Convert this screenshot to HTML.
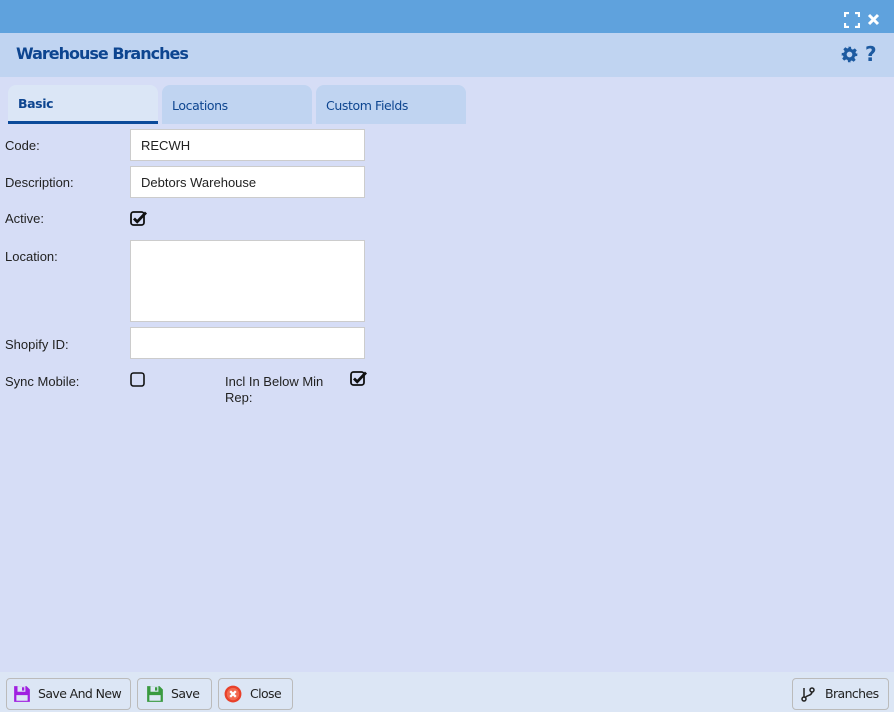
<!DOCTYPE html>
<html><head><style>
*{box-sizing:border-box;margin:0;padding:0}
body{width:894px;height:712px;background:#d6ddf6;font-family:"Liberation Sans",sans-serif;position:relative;overflow:hidden}
.a{position:absolute}
.top{left:0;top:0;width:894px;height:33px;background:#5fa2dd}
.title{left:0;top:33px;width:894px;height:44px;background:#c0d4f1}
.title span{position:absolute;left:16px;top:11px;font-family:"DejaVu Sans",sans-serif;font-weight:bold;font-size:16px;letter-spacing:-1px;color:#0d4590}
.tab{top:85px;width:150px;height:39px;background:#c0d4f1;border-radius:8px 8px 0 0;font-family:"DejaVu Sans",sans-serif;font-size:12.5px;letter-spacing:-0.4px;color:#0d4590;padding:13px 0 0 10px}
.lbl{left:5px;font-size:13px;color:#222}
.inp{left:130px;width:235px;background:#fff;border:1px solid #ccc;font-size:13px;color:#222;padding:8px 10px}
.foot{left:0;top:672px;width:894px;height:40px;background:#dce6f5}
.btn{top:678px;height:32px;border:1px solid #bbb;border-radius:4px;background:#dce6f5;font-family:"DejaVu Sans",sans-serif;font-size:12.5px;letter-spacing:-0.6px;color:#222;padding:7px 0 0 0}
</style></head><body>
<div class="a top"></div>
<svg class="a" style="left:844px;top:12px" width="16" height="16" viewBox="0 0 16 16" fill="none" stroke="#fff" stroke-width="2.2"><path d="M1 5V1h4M11 1h4v4M15 11v4h-4M5 15H1v-4"/></svg>
<svg class="a" style="left:867px;top:13px" width="13" height="13" viewBox="0 0 13 13" stroke="#fff" stroke-width="3"><path d="M2 2l9 9M11 2l-9 9"/></svg>
<div class="a title"><span>Warehouse Branches</span></div>
<svg class="a" style="left:841px;top:46px" width="17" height="17" viewBox="0 0 24 24"><path fill="#1d5aa0" d="M10 1h4l.6 3.2 2.2 1 2.7-1.9 2.8 2.8-1.9 2.7 1 2.2L23 10v4l-3.2.6-1 2.2 1.9 2.7-2.8 2.8-2.7-1.9-2.2 1L14 23h-4l-.6-3.2-2.2-1-2.7 1.9-2.8-2.8 1.9-2.7-1-2.2L1 14v-4l3.2-.6 1-2.2-1.9-2.7 2.8-2.8 2.7 1.9 2.2-1zM12 8a4 4 0 100 8 4 4 0 000-8z"/></svg>
<div class="a" style="left:865px;top:42px;font-family:'DejaVu Sans',sans-serif;font-weight:bold;font-size:20px;color:#1d5aa0">?</div>
<div class="a tab" style="left:8px;background:#dbe6f6;font-weight:bold;padding-top:11px;border-bottom:3px solid #0b4a9a">Basic</div>
<div class="a tab" style="left:162px">Locations</div>
<div class="a tab" style="left:316px">Custom Fields</div>
<div class="a lbl" style="top:138px">Code:</div>
<div class="a inp" style="top:129px;height:32px">RECWH</div>
<div class="a lbl" style="top:175px">Description:</div>
<div class="a inp" style="top:166px;height:32px">Debtors Warehouse</div>
<div class="a lbl" style="top:211px">Active:</div>
<svg class="a" style="left:130px;top:210px" width="19" height="17" viewBox="0 0 19 17"><rect x="1" y="2" width="13" height="13" rx="2.5" fill="none" stroke="#111" stroke-width="1.8"/><path d="M4 8.5l3.2 3.2L16 2.5" fill="none" stroke="#111" stroke-width="2.8"/></svg>
<div class="a lbl" style="top:249px">Location:</div>
<div class="a inp" style="top:240px;height:82px"></div>
<div class="a lbl" style="top:337px">Shopify ID:</div>
<div class="a inp" style="top:327px;height:32px"></div>
<div class="a lbl" style="top:374px">Sync Mobile:</div>
<svg class="a" style="left:130px;top:371px" width="17" height="17" viewBox="0 0 17 17"><rect x="1" y="2" width="13" height="13" rx="2.5" fill="none" stroke="#111" stroke-width="1.6"/></svg>
<div class="a lbl" style="left:225px;top:374px;line-height:16px">Incl In Below Min<br>Rep:</div>
<svg class="a" style="left:350px;top:370px" width="19" height="17" viewBox="0 0 19 17"><rect x="1" y="2" width="13" height="13" rx="2.5" fill="none" stroke="#111" stroke-width="1.8"/><path d="M4 8.5l3.2 3.2L16 2.5" fill="none" stroke="#111" stroke-width="2.8"/></svg>
<div class="a foot"></div>
<div class="a btn" style="left:6px;width:125px;padding-left:31px">Save And New</div>
<svg class="a" style="left:13px;top:685px" width="18" height="18" viewBox="0 0 16 16"><path d="M1 1h11l3 3v11H1z" fill="#a020e0"/><rect x="4" y="1" width="7" height="5" fill="#dce6f5"/><rect x="8" y="2" width="2" height="3" fill="#a020e0"/><rect x="3" y="9" width="10" height="5" fill="#dce6f5"/></svg>
<div class="a btn" style="left:137px;width:75px;padding-left:33px">Save</div>
<svg class="a" style="left:146px;top:685px" width="18" height="18" viewBox="0 0 16 16"><path d="M1 1h11l3 3v11H1z" fill="#3a9a40"/><rect x="4" y="1" width="7" height="5" fill="#dce6f5"/><rect x="8" y="2" width="2" height="3" fill="#3a9a40"/><rect x="3" y="9" width="10" height="5" fill="#dce6f5"/></svg>
<div class="a btn" style="left:218px;width:75px;padding-left:31px">Close</div>
<svg class="a" style="left:224px;top:685px" width="18" height="18" viewBox="0 0 16 16"><circle cx="8" cy="8" r="7.5" fill="#e8402a"/><circle cx="8" cy="8" r="5.5" fill="#f26a50"/><path d="M5.5 5.5l5 5M10.5 5.5l-5 5" stroke="#fff" stroke-width="2"/></svg>
<div class="a btn" style="left:792px;width:97px;padding-left:32px">Branches</div>
<svg class="a" style="left:800px;top:686px" width="16" height="16" viewBox="0 0 16 16" fill="none" stroke="#222" stroke-width="1.5"><circle cx="4" cy="13" r="2"/><circle cx="12" cy="4" r="2"/><path d="M4 2v9M12 6c0 4-6 3-7 6"/></svg>
</body></html>
